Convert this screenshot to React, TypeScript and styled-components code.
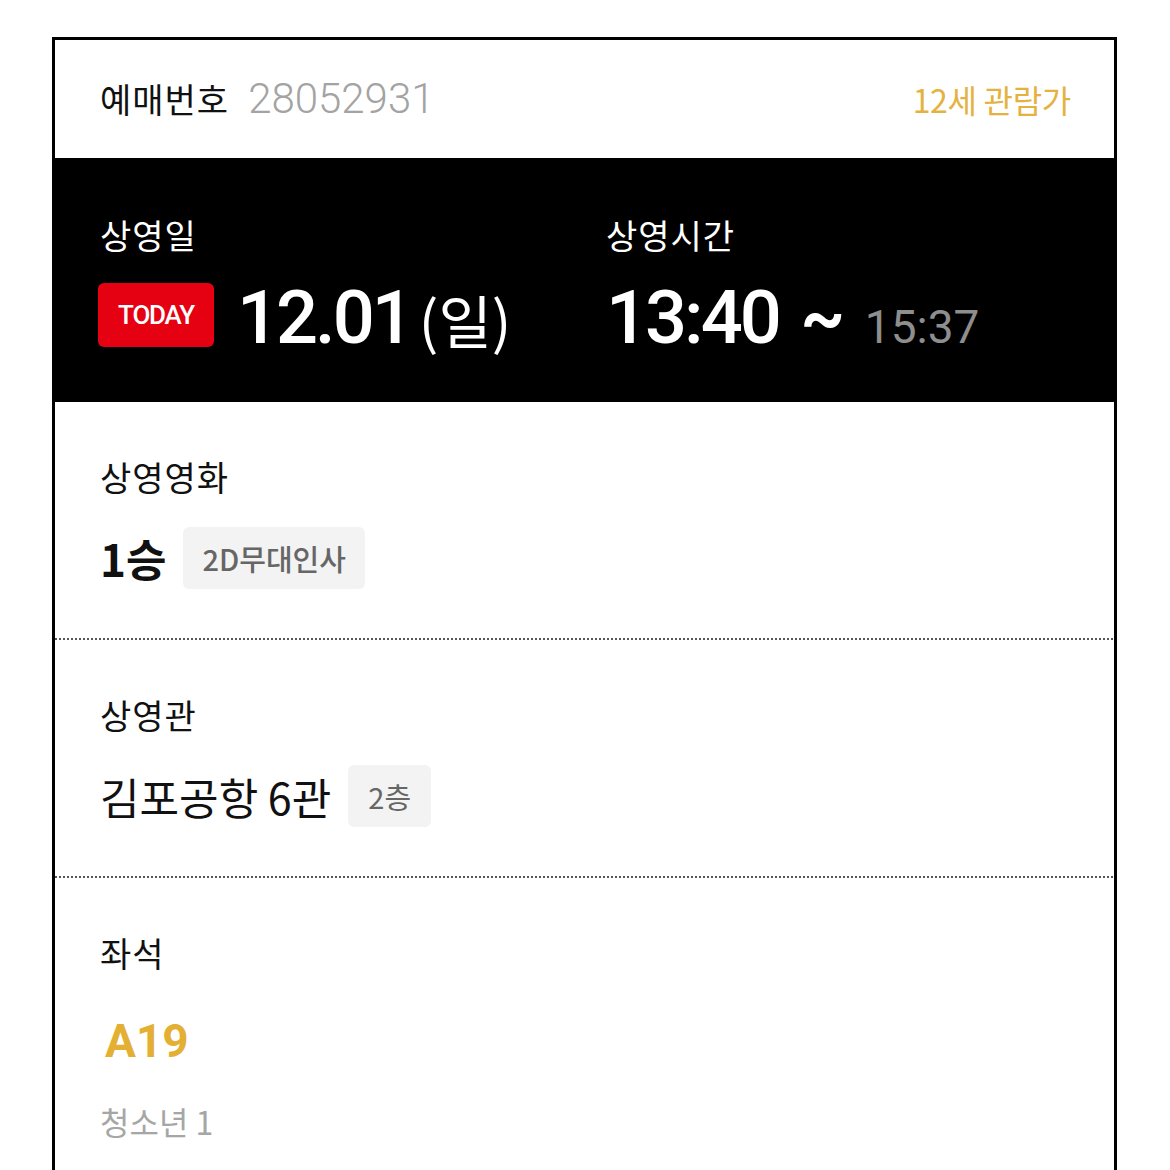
import styled, { createGlobalStyle } from 'styled-components';

const KR = `'Noto Sans CJK KR', 'Noto Sans', sans-serif`;
const NUM = `Roboto, 'Noto Sans CJK KR', sans-serif`;

const GlobalStyle = createGlobalStyle`
  html, body {
    margin: 0;
    padding: 0;
    background: #fff;
  }

  body {
    font-family: ${KR};
    color: #111;
  }

  * {
    box-sizing: border-box;
  }
`;

interface TagProps {
  $wide?: boolean;
}

function App() {
  return (
    <>
      <GlobalStyle />
      <Page>
        <Ticket>
          <Header>
            <BookingNo>
              <HeaderLabel>예매번호</HeaderLabel>
              <BookingDigits>28052931</BookingDigits>
            </BookingNo>
            <Rating>12세 관람가</Rating>
          </Header>

          <Schedule>
            <ScheduleCol>
              <DarkLabel>상영일</DarkLabel>
              <ScheduleRow>
                <TodayBadge>TODAY</TodayBadge>
                <BigNumber>12.01</BigNumber>
                <Weekday>(일)</Weekday>
              </ScheduleRow>
            </ScheduleCol>
            <ScheduleCol>
              <DarkLabel>상영시간</DarkLabel>
              <ScheduleRow>
                <BigNumber>13:40</BigNumber>
                <Tilde>~</Tilde>
                <EndTime>15:37</EndTime>
              </ScheduleRow>
            </ScheduleCol>
          </Schedule>

          <Section>
            <Label>상영영화</Label>
            <ValueRow>
              <MovieTitle>1승</MovieTitle>
              <Tag $wide>2D무대인사</Tag>
            </ValueRow>
          </Section>

          <Section $dotted>
            <Label>상영관</Label>
            <ValueRow>
              <TheaterName>김포공항 6관</TheaterName>
              <Tag>2층</Tag>
            </ValueRow>
          </Section>

          <SeatSection $dotted>
            <Label>좌석</Label>
            <SeatNo>A19</SeatNo>
            <Audience>청소년 1</Audience>
          </SeatSection>
        </Ticket>
      </Page>
    </>
  );
}

export default App;

const Page = styled.div`
  padding: 37px 0 0 52px;
`;

const Ticket = styled.div`
  width: 1065px;
  border: 3px solid #000;
  border-bottom: none;
  background: #fff;
`;

const Header = styled.div`
  display: flex;
  justify-content: space-between;
  align-items: center;

  height: 118px;
  padding: 0 43px 0 45px;
`;

const BookingNo = styled.div`
  display: flex;
  align-items: center;
  gap: 19px;
`;

const HeaderLabel = styled.span`
  font-size: 34px;
  line-height: 40px;
  letter-spacing: 1px;
  color: #111;
`;

const BookingDigits = styled.span`
  font-family: ${NUM};
  font-weight: 300;
  font-size: 42px;
  line-height: 40px;
  color: #a3a3a3;
`;

const Rating = styled.span`
  font-size: 32px;
  line-height: 40px;
  color: #e5b240;
  letter-spacing: -0.3px;
`;

const Schedule = styled.div`
  display: grid;
  grid-template-columns: 506px 1fr;

  height: 244px;
  padding: 57px 45px 0;
  background: #000;
`;

const ScheduleCol = styled.div`
  display: flex;
  flex-direction: column;
  gap: 21px;
`;

const DarkLabel = styled.span`
  font-size: 34px;
  line-height: 40px;
  letter-spacing: 1px;
  color: #fff;
`;

const ScheduleRow = styled.div`
  display: flex;
  align-items: center;
  height: 80px;
`;

const TodayBadge = styled.span`
  display: flex;
  align-items: center;
  justify-content: center;

  width: 116px;
  height: 64px;
  margin: -3px 23px 0 -2px;

  border-radius: 6px;
  background: #e50012;
  color: #fff;

  font-family: ${NUM};
  font-weight: 500;
  font-size: 26px;
  letter-spacing: -1.2px;
`;

const BigNumber = styled.span`
  margin-top: 4px;
  font-family: ${NUM};
  font-weight: 500;
  font-size: 74px;
  line-height: 80px;
  letter-spacing: -3px;
  color: #fff;
`;

const Weekday = styled.span`
  margin: 6px 0 0 8px;
  font-size: 58px;
  line-height: 80px;
  color: #fff;
`;

const Tilde = styled.span`
  margin: 4px 20px 0 22px;
  font-family: ${NUM};
  font-weight: 700;
  font-size: 68px;
  line-height: 80px;
  color: #fff;
`;

const EndTime = styled.span`
  margin-top: 22px;
  font-family: ${NUM};
  font-size: 46px;
  line-height: 80px;
  color: #8e8e8e;
`;

const Section = styled.section<{ $dotted?: boolean }>`
  display: flex;
  flex-direction: column;
  gap: 30px;

  padding: 55px 45px 49px;

  ${({ $dotted }) =>
    $dotted &&
    `
    padding-top: 57px;
    background: linear-gradient(to right, #555 50%, transparent 0) top left / 4px 2px repeat-x;
  `}
`;

const SeatSection = styled(Section)`
  gap: 0;
  padding-bottom: 80px;
`;

const Label = styled.span`
  font-size: 34px;
  line-height: 40px;
  letter-spacing: 1px;
  color: #111;
`;

const ValueRow = styled.div`
  display: flex;
  align-items: center;
  gap: 17px;
`;

const MovieTitle = styled.span`
  font-weight: 700;
  font-size: 44px;
  line-height: 62px;
  color: #111;
`;

const TheaterName = styled.span`
  font-size: 43px;
  line-height: 62px;
  color: #111;
`;

const Tag = styled.span<TagProps>`
  display: flex;
  align-items: center;

  height: 62px;
  padding: 0 ${({ $wide }) => ($wide ? '19px' : '20px')};

  border-radius: 6px;
  background: #f3f3f3;
  color: #666;

  font-weight: ${({ $wide }) => ($wide ? 500 : 400)};
  font-size: 29px;
  letter-spacing: 0;
`;

const SeatNo = styled.span`
  margin: 38px 0 0 5px;
  font-family: ${NUM};
  font-weight: 700;
  font-size: 46px;
  line-height: 60px;
  color: #e3b034;
`;

const Audience = styled.span`
  margin-top: 30px;
  font-size: 32px;
  line-height: 40px;
  color: #a6a6a6;
`;
